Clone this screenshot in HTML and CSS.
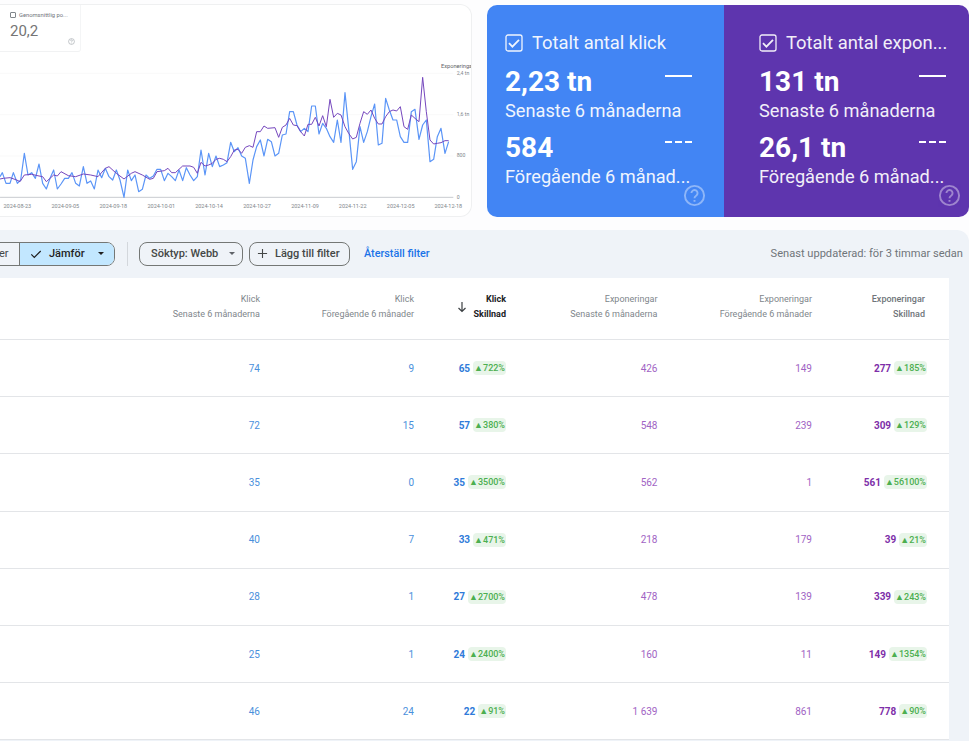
FILE: index.html
```html
<!DOCTYPE html>
<html lang="sv">
<head>
<meta charset="utf-8">
<title>Resultat</title>
<link rel="stylesheet" href="styles.css">
</head>
<body>
<div class="top">
  <section class="chart-card">
    <div class="metric">
      <div class="metric-label"><span class="mini-check"></span><span>Genomsnittlig po...</span></div>
      <div class="metric-value">20,2</div>
      <svg class="metric-help" viewBox="0 0 24 24"><circle cx="12" cy="12" r="10" fill="none" stroke="#9aa0a6" stroke-width="2"/><path d="M9 9.5a3 3 0 1 1 4.5 2.6c-1 .6-1.5 1.2-1.5 2.4M12 17v1.5" fill="none" stroke="#9aa0a6" stroke-width="2"/></svg>
    </div>
    <svg class="chart" viewBox="0 180 1416 470">
      <g class="grid">
        <line x1="0" x2="1360" y1="220" y2="220"/>
        <line x1="0" x2="1360" y1="344" y2="344"/>
        <line x1="0" x2="1360" y1="468" y2="468"/>
      </g>
      <line class="base" x1="0" x2="1360" y1="592" y2="592"/>
      <polyline class="blue" points="0,530 7,518 18,550 30,550 40,518 52,550 62,540 73,460 84,525 95,518 106,535 117,492 128,550 139,567 150,535 161,510 172,567 183,552 194,535 205,535 216,518 227,550 238,558 250,500 261,550 272,543 283,567 294,510 305,533 316,505 327,530 338,540 349,510 360,540 372,592 383,510 394,542 405,525 416,575 427,568 438,525 449,535 460,528 471,508 482,508 493,542 504,520 515,530 526,542 537,510 548,542 559,503 570,525 581,542 592,530 603,450 615,525 626,460 637,500 648,468 659,500 670,495 681,488 692,427 703,455 714,443 725,468 736,475 748,550 759,480 770,440 781,420 792,468 803,418 814,425 825,468 836,460 847,405 858,402 869,335 880,335 891,375 902,395 913,385 924,395 935,318 946,318 957,402 968,370 979,385 990,410 1001,427 1012,360 1023,427 1035,278 1046,385 1058,508 1069,485 1080,380 1091,427 1102,395 1113,350 1124,312 1135,435 1146,430 1157,295 1168,330 1179,360 1190,360 1201,410 1212,427 1223,427 1234,335 1245,328 1257,418 1268,375 1279,360 1290,485 1301,478 1312,410 1323,385 1335,460 1346,425"/>
      <polyline class="purple" points="0,537 10,535 30,533 50,540 60,545 73,525 95,523 117,528 128,530 139,545 161,525 172,528 183,515 205,527 227,530 250,522 272,525 294,530 316,505 327,500 349,520 372,537 394,520 405,515 427,525 449,538 460,535 471,515 493,512 504,505 515,518 526,518 548,498 570,498 581,502 592,520 603,487 615,498 626,495 637,490 648,478 659,475 670,478 681,485 692,470 703,450 714,448 725,460 736,442 748,437 759,442 770,395 781,395 792,378 803,385 825,383 836,412 847,382 858,375 869,355 880,375 891,377 902,395 913,408 924,373 935,373 946,352 957,378 968,347 979,380 990,298 1001,352 1012,340 1023,345 1035,380 1046,400 1058,417 1069,412 1080,370 1091,335 1102,343 1113,330 1124,355 1135,372 1146,372 1157,350 1168,335 1179,330 1190,333 1201,320 1212,380 1223,388 1234,345 1245,355 1257,365 1268,232 1279,335 1290,420 1301,432 1312,430 1323,428 1335,422 1346,422"/>
      <g class="ticks">
        <text x="52" y="625">2024-08-23</text>
        <text x="196" y="625">2024-09-05</text>
        <text x="340" y="625">2024-09-18</text>
        <text x="484" y="625">2024-10-01</text>
        <text x="627" y="625">2024-10-14</text>
        <text x="771" y="625">2024-10-27</text>
        <text x="915" y="625">2024-11-09</text>
        <text x="1058" y="625">2024-11-22</text>
        <text x="1202" y="625">2024-12-05</text>
        <text x="1345" y="625">2024-12-18</text>
      </g>
      <g class="axis">
        <text class="axis-title" x="1323" y="203">Exponeringar</text>
        <text x="1370" y="225">2,4 tn</text>
        <text x="1370" y="349">1,6 tn</text>
        <text x="1370" y="472">800</text>
        <text x="1370" y="596">0</text>
      </g>
    </svg>
  </section>

  <section class="kpis">
    <article class="kpi kpi-blue">
      <div class="kpi-title"><svg class="check" viewBox="0 0 18 18"><rect x="1" y="1" width="16" height="16" rx="2" fill="none" stroke="#fff" stroke-width="1.3"/><path d="M4 9.2l3.4 3.4L14 5.8" fill="none" stroke="#fff" stroke-width="1.8"/></svg><span>Totalt antal klick</span></div>
      <div class="kpi-row first"><span class="kpi-num">2,23 tn</span><span class="line-solid"></span></div>
      <div class="kpi-sub">Senaste 6 månaderna</div>
      <div class="kpi-row"><span class="kpi-num">584</span><span class="line-dash"></span></div>
      <div class="kpi-sub">Föregående 6 månad...</div>
      <svg class="kpi-help" viewBox="0 0 24 24"><circle cx="12" cy="12" r="10" fill="none" stroke="#fff" stroke-width="2"/><path d="M8.8 9.5a3.2 3.2 0 1 1 4.9 2.7c-1.1.7-1.7 1.3-1.7 2.6M12 16.6v2" fill="none" stroke="#fff" stroke-width="2"/></svg>
    </article>
    <article class="kpi kpi-purple">
      <div class="kpi-title"><svg class="check" viewBox="0 0 18 18"><rect x="1" y="1" width="16" height="16" rx="2" fill="none" stroke="#fff" stroke-width="1.3"/><path d="M4 9.2l3.4 3.4L14 5.8" fill="none" stroke="#fff" stroke-width="1.8"/></svg><span>Totalt antal expon...</span></div>
      <div class="kpi-row first"><span class="kpi-num">131 tn</span><span class="line-solid"></span></div>
      <div class="kpi-sub">Senaste 6 månaderna</div>
      <div class="kpi-row"><span class="kpi-num">26,1 tn</span><span class="line-dash"></span></div>
      <div class="kpi-sub">Föregående 6 månad...</div>
      <svg class="kpi-help" viewBox="0 0 24 24"><circle cx="12" cy="12" r="10" fill="none" stroke="#fff" stroke-width="2"/><path d="M8.8 9.5a3.2 3.2 0 1 1 4.9 2.7c-1.1.7-1.7 1.3-1.7 2.6M12 16.6v2" fill="none" stroke="#fff" stroke-width="2"/></svg>
    </article>
  </section>
</div>

<section class="panel">
  <div class="toolbar">
    <div class="segmented">
      <span class="seg seg-off">Filter</span>
      <span class="seg seg-on"><svg class="seg-check" viewBox="0 0 14 14"><path d="M1.5 7.5l3.5 3.5L12.5 3.5" fill="none" stroke="#1f1f1f" stroke-width="1.4"/></svg>Jämför<span class="caret dark"></span></span>
    </div>
    <span class="divider"></span>
    <span class="chip chip-type">Söktyp: Webb<span class="caret"></span></span>
    <span class="chip chip-add"><svg class="plus" viewBox="0 0 12 12"><path d="M6 1v10M1 6h10" stroke="#444746" stroke-width="1.2"/></svg>Lägg till filter</span>
    <span class="reset">Återställ filter</span>
    <span class="updated">Senast uppdaterad: för 3 timmar sedan</span>
  </div>

  <div class="table">
    <div class="row head">
      <div>Klick<br>Senaste 6 månaderna</div>
      <div>Klick<br>Föregående 6 månader</div>
      <div class="sorted"><svg class="arrow" viewBox="0 0 10 12"><path d="M5 1v9.5M1.5 7L5 10.5 8.500 7" fill="none" stroke="#3c4043" stroke-width="1.200"/></svg><span>Klick<br>Skillnad</span></div>
      <div>Exponeringar<br>Senaste 6 månaderna</div>
      <div>Exponeringar<br>Föregående 6 månader</div>
      <div class="head-strong">Exponeringar<br>Skillnad</div>
    </div>

    <div class="row"><div class="c-blue">74</div><div class="c-blue">9</div><div class="diff d-blue">65<span class="badge">▲722%</span></div><div class="c-purple">426</div><div class="c-purple">149</div><div class="diff d-purple">277<span class="badge">▲185%</span></div></div>
    <div class="row"><div class="c-blue">72</div><div class="c-blue">15</div><div class="diff d-blue">57<span class="badge">▲380%</span></div><div class="c-purple">548</div><div class="c-purple">239</div><div class="diff d-purple">309<span class="badge">▲129%</span></div></div>
    <div class="row"><div class="c-blue">35</div><div class="c-blue">0</div><div class="diff d-blue">35<span class="badge">▲3500%</span></div><div class="c-purple">562</div><div class="c-purple">1</div><div class="diff d-purple">561<span class="badge">▲56100%</span></div></div>
    <div class="row"><div class="c-blue">40</div><div class="c-blue">7</div><div class="diff d-blue">33<span class="badge">▲471%</span></div><div class="c-purple">218</div><div class="c-purple">179</div><div class="diff d-purple">39<span class="badge">▲21%</span></div></div>
    <div class="row"><div class="c-blue">28</div><div class="c-blue">1</div><div class="diff d-blue">27<span class="badge">▲2700%</span></div><div class="c-purple">478</div><div class="c-purple">139</div><div class="diff d-purple">339<span class="badge">▲243%</span></div></div>
    <div class="row"><div class="c-blue">25</div><div class="c-blue">1</div><div class="diff d-blue">24<span class="badge">▲2400%</span></div><div class="c-purple">160</div><div class="c-purple">11</div><div class="diff d-purple">149<span class="badge">▲1354%</span></div></div>
    <div class="row"><div class="c-blue">46</div><div class="c-blue">24</div><div class="diff d-blue">22<span class="badge">▲91%</span></div><div class="c-purple">1 639</div><div class="c-purple">861</div><div class="diff d-purple">778<span class="badge">▲90%</span></div></div>
  </div>
</section>
</body>
</html>
```

FILE: styles.css
```css
* { box-sizing: border-box; }
html, body { margin: 0; height: 741px; overflow: hidden; background: #fdfdfe; }
body { font-family: Roboto, "Liberation Sans", sans-serif; color: #3c4043; }

.top { display: flex; gap: 15px; height: 230px; padding-top: 4px; }

.chart-card { position: relative; width: 472px; height: 213px; background: #fff; border: 1px solid #eff0f1; border-left: 0; border-radius: 0 12px 12px 0; overflow: hidden; }
.metric { position: relative; width: 81px; height: 47px; background: #fff; border-right: 1px solid #f4f5f6; border-bottom: 1px solid #f1f2f3; border-radius: 0 0 3px 0; padding: 7px 0 0 10px; }
.metric-label { display: flex; align-items: center; gap: 3px; font-size: 5.8px; color: #70757a; white-space: nowrap; }
.mini-check { width: 6px; height: 6px; flex: none; border: 0.7px solid #80868b; border-radius: 1px; }
.metric-value { font-size: 15px; line-height: 18px; margin-top: 4px; color: #757575; }
.metric-help { position: absolute; right: 5px; bottom: 6px; width: 7px; height: 7px; }
.chart { display: block; width: 472px; height: 156.67px; margin-top: 8px; overflow: hidden; }
.grid line { stroke: #f3f3f3; stroke-width: 1.5; }
.base { stroke: #bdc1c6; stroke-width: 2.5; }
.blue, .purple { fill: none; stroke-linejoin: round; }
.blue { stroke: #5b95f7; stroke-width: 3.6; }
.purple { stroke: #7446bd; stroke-width: 3; }
.ticks text { font-size: 16.5px; fill: #80868b; text-anchor: middle; }
.axis text { font-size: 15.5px; fill: #80868b; }
.axis .axis-title { font-size: 17px; fill: #5f6368; }

.kpis { display: flex; width: 482px; height: 212px; margin-top: 1px; border-radius: 10px; overflow: hidden; }
.kpi { position: relative; color: #fff; padding: 27px 0 0 18px; }
.kpi-blue { width: 237px; background: #4285f4; }
.kpi-purple { width: 245px; background: #5e35ae; padding-left: 35px; }
.kpi-title { display: flex; align-items: center; gap: 9px; font-size: 18.4px; line-height: 22px; white-space: nowrap; opacity: .92; }
.check { width: 18px; height: 18px; flex: none; }
.kpi-row { display: flex; justify-content: space-between; width: 187px; height: 36px; line-height: 36px; margin-top: 8px; }
.kpi-row.first { margin-top: 10px; }
.kpi-num { font-size: 28px; font-weight: 700; }
.line-solid, .line-dash { width: 27px; height: 2px; margin-top: 11px; }
.line-solid { background: #fff; }
.line-dash { background: repeating-linear-gradient(90deg, #fff 0 7px, transparent 7px 10px); }
.kpi-sub { font-size: 18.200px; line-height: 22px; white-space: nowrap; opacity: .92; }
.kpi-help { position: absolute; right: 18px; bottom: 10px; width: 23px; height: 23px; opacity: .4; }
.kpi-purple .kpi-help { right: 8px; }

.panel { height: 511px; background: #eff3f8; border-radius: 0 12px 0 0; }
.toolbar { display: flex; align-items: center; height: 47px; padding-right: 6px; font-size: 11px; }
.segmented { display: flex; height: 24px; margin-left: -41px; border: 1px solid #747775; border-radius: 8px; overflow: hidden; font-weight: 500; }
.seg { display: flex; align-items: center; height: 100%; white-space: nowrap; color: #1f1f1f; }
.seg-off { width: 60px; padding-left: 24px; justify-content: flex-start; overflow: hidden; font-weight: 400; color: #444746; border-right: 1px solid #747775; }
.seg-on { width: 94px; padding-left: 10px; background: #c2e7ff; }
.seg-check { width: 12px; height: 12px; margin-right: 7px; }
.caret { display: inline-block; width: 0; height: 0; margin-left: 11px; border-left: 3.5px solid transparent; border-right: 3.500px solid transparent; border-top: 3.500px solid #5f6368; }
.caret.dark { margin-left: 13px; border-top-color: #1f1f1f; }
.divider { width: 1px; height: 24px; margin: 0 11px 0 12px; background: #d3d7dc; }
.chip { display: flex; align-items: center; height: 24px; border: 1px solid #747775; border-radius: 8px; color: #444746; font-weight: 500; white-space: nowrap; }
.chip-type { width: 104px; padding-left: 11px; }
.chip-add { width: 101px; margin-left: 6px; padding-left: 7px; }
.plus { width: 11px; height: 11px; margin-right: 7px; }
.reset { margin-left: 14px; color: #1a73e8; font-size: 10.800px; font-weight: 500; white-space: nowrap; }
.updated { margin-left: auto; color: #70757a; font-size: 11.100px; white-space: nowrap; }

.table { width: 949px; margin-top: 1px; background: #fff; }
.row { display: grid; grid-template-columns: 260px 154px 92px 151.5px 154.5px 113px; align-items: center; height: 57.2px; border-bottom: 1px solid #e3e5e8; font-size: 10px; }
.row > div { text-align: right; white-space: nowrap; }
.row.head { height: 62px; padding-bottom: 4px; line-height: 15px; font-size: 9px; color: #80868b; }
.sorted { display: flex; justify-content: flex-end; align-items: center; gap: 7px; color: #202124; font-weight: 700; }
.arrow { width: 10px; height: 12px; }
.head-strong { font-weight: 500; color: #70757a; }
.c-blue { color: #4a90dc; }
.c-purple { color: #a164c4; }
.diff { font-weight: 700; display: flex; justify-content: flex-end; align-items: center; gap: 3px; }
.d-blue { color: #2f7bd9; }
.d-purple { color: #7e2fa9; margin-right: -2px; }
.badge { display: inline-block; height: 14px; line-height: 14px; padding: 0 1px; border-radius: 4px; background: #e8f5e9; color: #4caf50; font-weight: 500; font-size: 9px; }
```
